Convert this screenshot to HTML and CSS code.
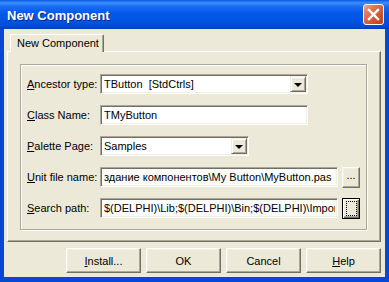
FILE: index.html
```html
<!DOCTYPE html>
<html lang="en">
<head>
    <meta charset="UTF-8">
    <title>New Component</title>
    <link rel="stylesheet" href="styles.css">
</head>
<body>
    <!-- Janela do diálogo -->
    <div class="window">
        <div class="titlebar">
            <span class="title">New Component</span>
            <button class="close" aria-label="Close">
                <svg width="13" height="13" viewBox="0 0 13 13">
                    <path d="M2 2 L11 11 M11 2 L2 11" stroke="#fff" stroke-width="2.4" stroke-linecap="square"/>
                </svg>
            </button>
        </div>

        <div class="client">
            <div class="tabs">
                <div class="tab">New Component</div>
            </div>

            <div class="page">
                <div class="bevel">
                    <div class="row">
                        <label class="lbl"><u>A</u>ncestor type:</label>
                        <div class="field combo w-wide">
                            <span class="text">TButton&nbsp; [StdCtrls]</span>
                            <span class="drop"></span>
                        </div>
                    </div>

                    <div class="row">
                        <label class="lbl"><u>C</u>lass Name:</label>
                        <div class="field w-wide"><span class="text">TMyButton</span></div>
                    </div>

                    <div class="row">
                        <label class="lbl"><u>P</u>alette Page:</label>
                        <div class="field combo w-short">
                            <span class="text">Samples</span>
                            <span class="drop"></span>
                        </div>
                    </div>

                    <div class="row">
                        <label class="lbl"><u>U</u>nit file name:</label>
                        <div class="field w-path"><span class="text">здание компонентов\My Button\MyButton.pas</span></div>
                        <button class="btn browse">...</button>
                    </div>

                    <div class="row">
                        <label class="lbl"><u>S</u>earch path:</label>
                        <div class="field w-path"><span class="text">$(DELPHI)\Lib;$(DELPHI)\Bin;$(DELPHI)\Imports;$(DELPHI)\Projects\Bpl</span></div>
                        <button class="btn browse focused"><span class="focus-rect"></span></button>
                    </div>
                </div>
            </div>

            <div class="buttons">
                <button class="btn push"><u>I</u>nstall...</button>
                <button class="btn push">OK</button>
                <button class="btn push">Cancel</button>
                <button class="btn push"><u>H</u>elp</button>
            </div>
        </div>
    </div>
</body>
</html>
```

FILE: styles.css
```css
body {
    margin: 0;
    background: #ffffff;
    font: normal 11px "Liberation Sans", Arial, sans-serif;
    color: #000000;
}

.window {
    width: 389px;
    height: 282px;
    background: #0747d6;
    display: flex;
    flex-direction: column;
}

.titlebar {
    height: 29px;
    display: flex;
    align-items: center;
    justify-content: space-between;
    padding: 0 5px 0 7px;
    background: linear-gradient(to bottom, #0858e4 0%, #3c8ffb 10%, #1a6cf4 22%, #0459e8 45%, #0053e0 75%, #0049d4 92%, #003cbf 100%);
}

.title {
    color: #ffffff;
    font: bold 13px "Liberation Sans", Arial, sans-serif;
    text-shadow: 1px 1px #0a2a8a;
    margin-top: 1px;
}

.close {
    width: 21px;
    height: 21px;
    padding: 0;
    border: 1px solid #ffffff;
    border-radius: 3px;
    background: linear-gradient(135deg, #f0a48a 0%, #e2704e 35%, #d2502c 70%, #c23c1c 100%);
    display: flex;
    align-items: center;
    justify-content: center;
}

/* Área do cliente */
.client {
    height: 248px;
    margin: 0 4px;
    padding: 5px 4px 0 3px;
    box-sizing: border-box;
    background: #ece9d8;
}

.tabs {
    display: flex;
    padding-left: 3px;
}

.tab {
    position: relative;
    height: 18px;
    width: 94px;
    box-sizing: border-box;
    border: 1px solid;
    border-color: #ffffff #716f64 transparent #ffffff;
    border-bottom: none;
    border-radius: 2px 2px 0 0;
    background: #ece9d8;
    margin-bottom: -1px;
    padding: 2px 0 0 6px;
    box-shadow: inset -1px 0 #aca899;
}

.page {
    height: 191px;
    box-sizing: border-box;
    border: 1px solid;
    border-color: #ffffff #716f64 #716f64 #ffffff;
    box-shadow: inset -1px -1px #aca899;
    padding: 12px 13px 11px 12px;
}

.bevel {
    height: 166px;
    box-sizing: border-box;
    border: 1px solid #aca899;
    box-shadow: inset 1px 1px #ffffff, 1px 1px #ffffff;
    padding: 9px 6px 0 6px;
    display: flex;
    flex-direction: column;
    gap: 11px;
}

.row {
    height: 20px;
    display: flex;
    align-items: center;
}

.lbl {
    width: 73px;
    flex: none;
}

/* Campos afundados */
.field {
    height: 20px;
    box-sizing: border-box;
    background: #ffffff;
    border: 1px solid;
    border-color: #aca899 #ffffff #ffffff #aca899;
    box-shadow: inset 1px 1px #716f64, inset -1px -1px #f1efe2;
    display: flex;
    align-items: center;
    padding: 0 2px 0 3px;
    overflow: hidden;
    white-space: nowrap;
}

.field .text {
    flex: 1;
    overflow: hidden;
}

.w-wide { width: 208px; }
.w-short { width: 149px; }
.w-path { width: 238px; }

.combo {
    padding-right: 1px;
}

.drop {
    width: 16px;
    height: 16px;
    box-sizing: border-box;
    flex: none;
    background: #ece9d8;
    border: 1px solid;
    border-color: #f1efe2 #716f64 #716f64 #f1efe2;
    box-shadow: inset 1px 1px #ffffff, inset -1px -1px #aca899;
    display: flex;
    align-items: center;
    justify-content: center;
}

.drop::after {
    content: "";
    border-left: 4px solid transparent;
    border-right: 4px solid transparent;
    border-top: 4px solid #000000;
    margin-top: 1px;
}

/* Botões em relevo */
.btn {
    font: normal 11px "Liberation Sans", Arial, sans-serif;
    color: #000000;
    background: #ece9d8;
    border: 1px solid;
    border-color: #ffffff #716f64 #716f64 #ffffff;
    box-shadow: inset -1px -1px #aca899, inset 1px 1px #f1efe2;
    padding: 0;
    box-sizing: border-box;
}

.browse {
    width: 18px;
    height: 21px;
    margin-left: 4px;
    display: flex;
    align-items: center;
    justify-content: center;
    line-height: 1;
    padding-bottom: 3px;
}

.browse.focused {
    border: 1px solid #000000;
    box-shadow: inset 1px 1px #ffffff, inset -1px -1px #716f64, inset -2px -2px #aca899;
    padding: 0;
}

.focus-rect {
    width: 9px;
    height: 13px;
    border: 1px dotted #000000;
}

.buttons {
    display: flex;
    justify-content: flex-end;
    gap: 5px;
    margin-top: 6px;
}

.push {
    width: 75px;
    height: 25px;
}
```
